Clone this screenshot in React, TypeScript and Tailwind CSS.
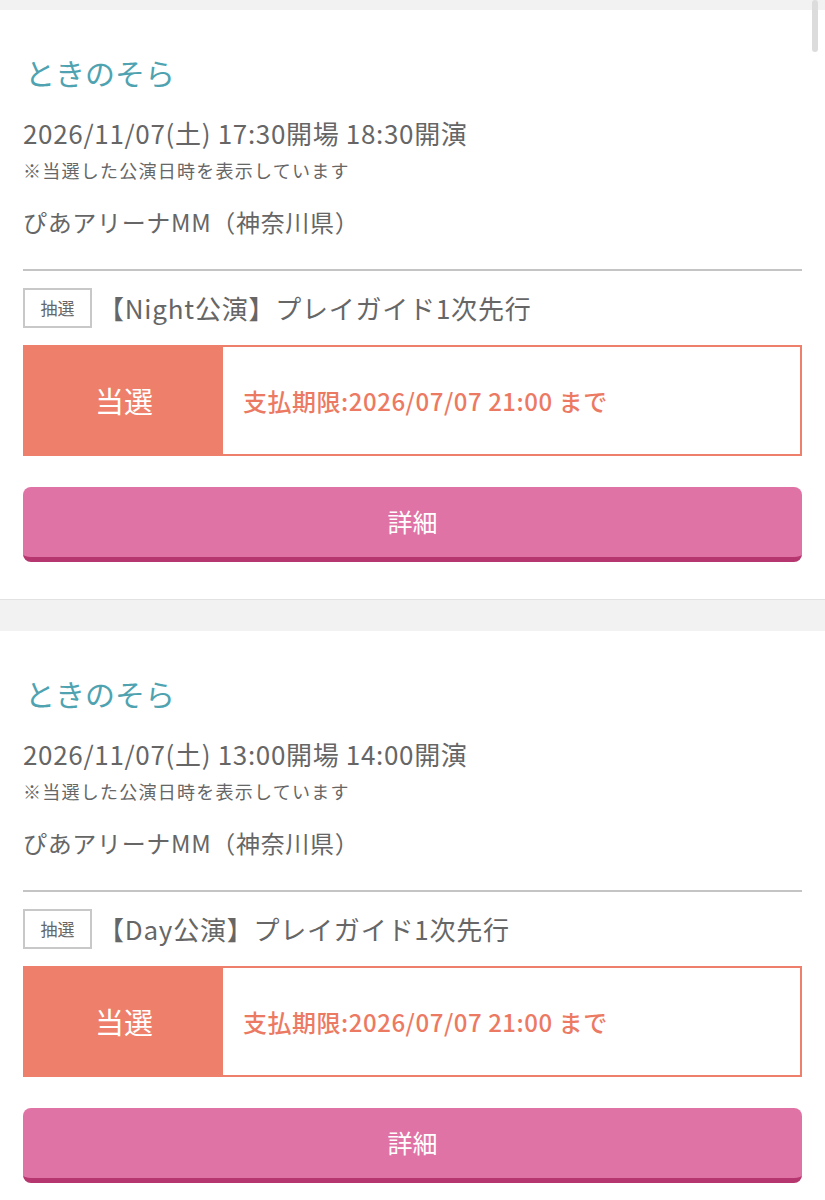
const FONT = "font-['Noto_Sans_CJK_JP','Noto_Sans',sans-serif]";

type Ticket = {
  date: string;
  venue: string;
  title: string;
  deadline: string;
};

const TICKETS: Ticket[] = [
  {
    date: "2026/11/07(土) 17:30開場 18:30開演",
    venue: "ぴあアリーナMM（神奈川県）",
    title: "【Night公演】プレイガイド1次先行",
    deadline: "支払期限:2026/07/07 21:00 まで",
  },
  {
    date: "2026/11/07(土) 13:00開場 14:00開演",
    venue: "ぴあアリーナMM（神奈川県）",
    title: "【Day公演】プレイガイド1次先行",
    deadline: "支払期限:2026/07/07 21:00 まで",
  },
];

function TicketCard({ t }: { t: Ticket }) {
  return (
    <section className="bg-white px-[23px] pt-[42px] pb-[37px]">
      <h2 className="text-[30px] leading-[40px] text-[#4fa3b1] pl-[2px]">ときのそら</h2>
      <p className="mt-[25px] text-[26px] leading-[32px] tracking-[0.026em] text-[#666]">{t.date}</p>
      <p className="mt-[9px] text-[18px] leading-[24px] tracking-[0.07em] text-[#666]">※当選した公演日時を表示しています</p>
      <p className="mt-[24px] text-[24px] leading-[32px] tracking-[0.028em] text-[#666]">{t.venue}</p>
      <div className="mt-[31px] h-[2px] bg-[#c4c4c4]" />
      <div className="mt-[17px] flex items-center gap-[6px]">
        <span className="flex h-[40px] w-[69px] items-center justify-center border-2 border-[#c8c8c8] text-[17px] text-[#666]">
          抽選
        </span>
        <span className="text-[26px] leading-[32px] tracking-[0.03em] text-[#666]">{t.title}</span>
      </div>
      <div className="mt-[17px] flex h-[111px] border-2 border-[#ee7f6b]">
        <div className="flex w-[198px] items-center justify-center bg-[#ee7f6b] text-[29px] text-white">
          当選
        </div>
        <div className="flex flex-1 items-center pl-[20px] text-[24px] font-medium tracking-[0.022em] text-[#ec7a63]">
          {t.deadline}
        </div>
      </div>
      <button className="mt-[31px] flex h-[75px] w-full items-center justify-center rounded-[8px] border-b-[5px] border-[#b6376f] bg-[#e073a6] text-[25px] text-white">
        詳細
      </button>
    </section>
  );
}

export default function App() {
  return (
    <div className={`${FONT} relative min-h-[1200px] bg-[#f2f2f2] pt-[10px]`}>
      <div className="flex flex-col">
        {TICKETS.map((t, i) => (
          <div key={i}>
            {i > 0 && <div className="h-[32px] border-t border-[#e2e2e2] bg-[#f2f2f2]" />}
            <TicketCard t={t} />
          </div>
        ))}
      </div>
      <div className="absolute right-[7px] top-0 h-[52px] w-[6px] rounded-full bg-[#dcdcdc]" />
    </div>
  );
}
